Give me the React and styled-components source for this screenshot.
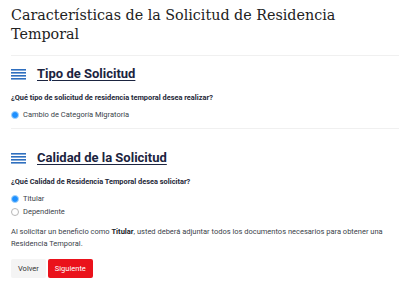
import React, { useState } from 'react';
import styled, { createGlobalStyle } from 'styled-components';

const GlobalStyle = createGlobalStyle`
  html, body {
    margin: 0;
    padding: 0;
    background: #ffffff;
  }
  body {
    font-family: Roboto, "Liberation Sans", sans-serif;
  }
`;

const Page = styled.div`
  padding: 6px 1px 0 11px;
`;

const Title = styled.h1`
  margin: 0;
  font-family: "DejaVu Serif", "Liberation Serif", serif;
  font-weight: 400;
  font-size: 14.3px;
  line-height: 19px;
  color: #222;
  padding-bottom: 11px;
  border-bottom: 1px solid #f0f0f0;
`;

const Section = styled.section`
  padding: ${(p) => (p.last ? '20px 0 10px' : '9px 0 9px')};
  border-bottom: ${(p) => (p.last ? 'none' : '1px solid #f0f0f0')};
`;

const Heading = styled.h2`
  display: flex;
  align-items: center;
  gap: 11px;
  margin: 0 0 10px;
  font-size: 13px;
  line-height: 18px;
  font-weight: 700;
  color: #1b2440;
`;

const HeadingText = styled.span`
  text-decoration: underline;
  text-underline-offset: 2px;
  text-decoration-thickness: 1px;
`;

const Question = styled.div`
  font-size: 7.4px;
  line-height: 9px;
  font-weight: 700;
  color: #1e2838;
  margin-bottom: 8px;
`;

const Options = styled.div`
  display: flex;
  flex-direction: column;
  gap: 4px;
`;

const Option = styled.label`
  display: flex;
  align-items: center;
  gap: 4px;
  font-size: 7.5px;
  line-height: 9px;
  color: #3a3f4a;
  cursor: pointer;
`;

const Radio = styled.span`
  width: 8px;
  height: 8px;
  box-sizing: border-box;
  border-radius: 50%;
  border: ${(p) => (p.checked ? '1.5px solid #a6d4fb' : '1px solid #b8b8b8')};
  background: ${(p) => (p.checked ? '#1e90ff' : '#fff')};
`;

const Note = styled.p`
  margin: 0 0 9px;
  font-size: 7.5px;
  line-height: 12px;
  color: #3a3f4a;
  b {
    color: #1b1f2a;
  }
`;

const Actions = styled.div`
  display: flex;
  gap: 2px;
`;

const Button = styled.button`
  height: 19px;
  padding: 0 7px;
  border: none;
  border-radius: 2px;
  font-family: Roboto, sans-serif;
  font-size: 7.5px;
  background: ${(p) => (p.primary ? '#ea121b' : '#f4f4f4')};
  color: ${(p) => (p.primary ? '#fff' : '#333')};
`;

const ListIcon = () => (
  <svg width="15" height="11" viewBox="0 0 15 11">
    <rect x="0" y="0" width="15" height="1.6" fill="#2f6fbf" />
    <rect x="0" y="3" width="15" height="1.6" fill="#2f6fbf" />
    <rect x="0" y="6" width="15" height="1.6" fill="#2f6fbf" />
    <rect x="0" y="9" width="15" height="1.6" fill="#2f6fbf" />
  </svg>
);

const App = () => {
  const [quality, setQuality] = useState('titular');
  return (
    <>
      <GlobalStyle />
      <Page>
        <Title>Características de la Solicitud de Residencia Temporal</Title>
        <Section>
          <Heading>
            <ListIcon />
            <HeadingText>Tipo de Solicitud</HeadingText>
          </Heading>
          <Question>¿Qué tipo de solicitud de residencia temporal desea realizar?</Question>
          <Options>
            <Option>
              <Radio checked />
              Cambio de Categoría Migratoria
            </Option>
          </Options>
        </Section>
        <Section last>
          <Heading>
            <ListIcon />
            <HeadingText>Calidad de la Solicitud</HeadingText>
          </Heading>
          <Question>¿Qué Calidad de Residencia Temporal desea solicitar?</Question>
          <Options>
            <Option onClick={() => setQuality('titular')}>
              <Radio checked={quality === 'titular'} />
              Titular
            </Option>
            <Option onClick={() => setQuality('dependiente')}>
              <Radio checked={quality === 'dependiente'} />
              Dependiente
            </Option>
          </Options>
        </Section>
        <Note>
          Al solicitar un beneficio como <b>Titular</b>, usted deberá adjuntar todos los documentos
          necesarios para obtener una Residencia Temporal.
        </Note>
        <Actions>
          <Button>Volver</Button>
          <Button primary>Siguiente</Button>
        </Actions>
      </Page>
    </>
  );
};

export default App;
